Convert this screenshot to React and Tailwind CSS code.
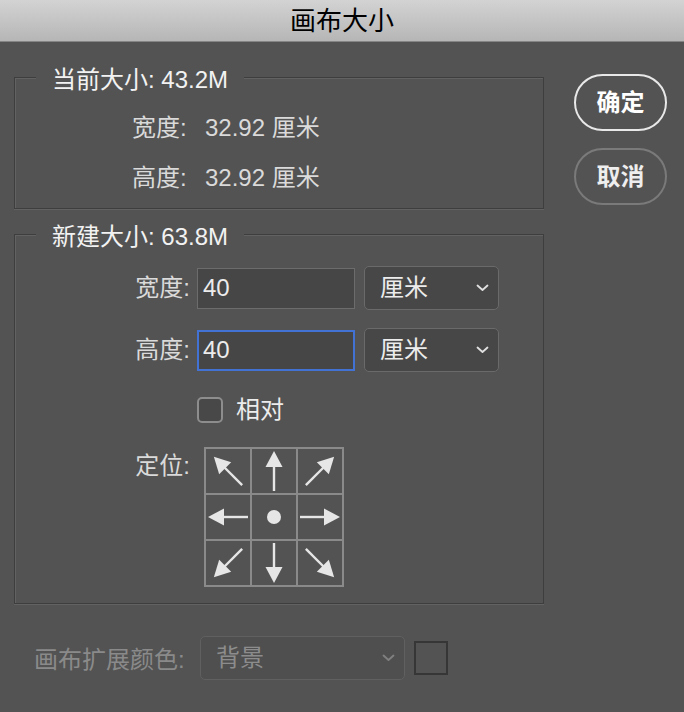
import React from "react";

function Arrow({ rot }) {
  return (
    <svg width="44" height="44" viewBox="0 0 44 44">
      <g transform={`rotate(${rot} 22 22)`} fill="#e6e6e6" stroke="#e6e6e6">
        <line x1="22" y1="16" x2="22" y2="42" strokeWidth="2.4" />
        <polygon points="22,2 13.5,18 30.5,18" stroke="none" />
      </g>
    </svg>
  );
}

function Dot() {
  return (
    <svg width="44" height="44" viewBox="0 0 44 44">
      <circle cx="22" cy="22" r="7" fill="#e6e6e6" />
    </svg>
  );
}

function Chevron({ color = "#e0e0e0" }) {
  return (
    <svg width="13" height="8" viewBox="0 0 13 8">
      <polyline points="1.5,1.5 6.5,6 11.5,1.5" fill="none" stroke={color} strokeWidth="1.8" strokeLinecap="round" strokeLinejoin="round" />
    </svg>
  );
}

export default function App() {
  const cells = [-45, 0, 45, -90, null, 90, -135, 180, 135];
  return (
    <div className="w-[684px] h-[712px] bg-[#535353] flex flex-col font-['Liberation_Sans','Noto_Sans_CJK_SC',sans-serif] overflow-hidden">
      <div className="h-[42px] shrink-0 bg-gradient-to-b from-[#d3d3d3] to-[#b6b6b6] border-b border-[#858585] flex items-center justify-center text-[26px] text-black leading-none">
        画布大小
      </div>
      <div className="flex">
        <div className="ml-[14px] w-[530px] flex flex-col">
          <fieldset className="mt-[20px] border border-[#3e3e3e] shadow-[inset_1px_1px_0_#626262,0_1px_0_#626262] pb-[5px]">
            <legend className="ml-[21px] px-[16px] pt-[6px] text-[24px] leading-[24px] text-[#f2f2f2] bg-[#535353]">
              当前大小: 43.2M
            </legend>
            <div className="pl-[117px] mt-[11px] text-[24px] text-[#dadada]">
              <div className="h-[50px] flex items-center">
                <span className="w-[73px]">宽度:</span>
                <span>32.92 厘米</span>
              </div>
              <div className="h-[50px] flex items-center">
                <span className="w-[73px]">高度:</span>
                <span>32.92 厘米</span>
              </div>
            </div>
          </fieldset>

          <fieldset className="mt-[10px] border border-[#3e3e3e] shadow-[inset_1px_1px_0_#626262,0_1px_0_#626262] pb-[16px]">
            <legend className="ml-[21px] px-[16px] pt-[6px] text-[24px] leading-[24px] text-[#f2f2f2] bg-[#535353]">
              新建大小: 63.8M
            </legend>
            <div className="mt-[17px] h-[44px] flex items-center text-[24px] text-[#dadada]">
              <span className="w-[175px] text-right">宽度:</span>
              <div className="ml-[7px] w-[158px] h-[41px] bg-[#464646] border border-[#6c6c6c] flex items-center pl-[5px] text-[#ececec]">40</div>
              <div className="ml-[9px] w-[135px] h-[44px] rounded-[5px] bg-[#474747] border border-[#6a6a6a] flex items-center justify-between pl-[15px] pr-[9px] text-[#ececec]">
                <span>厘米</span>
                <Chevron />
              </div>
            </div>
            <div className="mt-[18px] h-[44px] flex items-center text-[24px] text-[#dadada]">
              <span className="w-[175px] text-right">高度:</span>
              <div className="ml-[7px] w-[158px] h-[41px] bg-[#464646] border-2 border-[#4272d3] flex items-center pl-[4px] text-[#ececec]">40</div>
              <div className="ml-[9px] w-[135px] h-[44px] rounded-[5px] bg-[#474747] border border-[#6a6a6a] flex items-center justify-between pl-[15px] pr-[9px] text-[#ececec]">
                <span>厘米</span>
                <Chevron />
              </div>
            </div>
            <div className="mt-[25px] h-[26px] flex items-center pl-[182px] text-[24px] text-[#ececec]">
              <div className="w-[26px] h-[26px] rounded-[5px] border-2 border-[#8d8d8d] bg-[#484848]" />
              <span className="ml-[13px]">相对</span>
            </div>
            <div className="mt-[24px] flex items-start text-[24px] text-[#dadada]">
              <span className="w-[175px] text-right mt-[7px] leading-[24px]">定位:</span>
              <div className="ml-[14px] grid grid-cols-3 gap-[2px] p-[2px] bg-[#8a8a8a]">
                {cells.map((r, i) => (
                  <div key={i} className="w-[44px] h-[44px] bg-[#535353]">
                    {r === null ? <Dot /> : <Arrow rot={r} />}
                  </div>
                ))}
              </div>
            </div>
          </fieldset>

          <div className="mt-[32px] flex items-center pl-[20px] text-[24px]">
            <span className="w-[166px] text-[#8a8a8a] mt-[3px]">画布扩展颜色:</span>
            <div className="w-[205px] h-[44px] rounded-[5px] bg-[#4f4f4f] border border-[#606060] flex items-center justify-between pl-[15px] pr-[9px] text-[#8c8c8c]">
              <span>背景</span>
              <Chevron color="#808080" />
            </div>
            <div className="ml-[9px] w-[34px] h-[34px] border-2 border-[#363636] bg-[#535353]" />
          </div>
        </div>

        <div className="ml-[30px] pt-[32px] flex flex-col gap-[17px]">
          <div className="w-[93px] h-[57px] rounded-full border-2 border-[#e8e8e8] flex items-center justify-center text-[24px] font-semibold text-white">
            确定
          </div>
          <div className="w-[93px] h-[57px] rounded-full border-2 border-[#7a7a7a] flex items-center justify-center text-[24px] font-semibold text-[#eeeeee]">
            取消
          </div>
        </div>
      </div>
    </div>
  );
}
